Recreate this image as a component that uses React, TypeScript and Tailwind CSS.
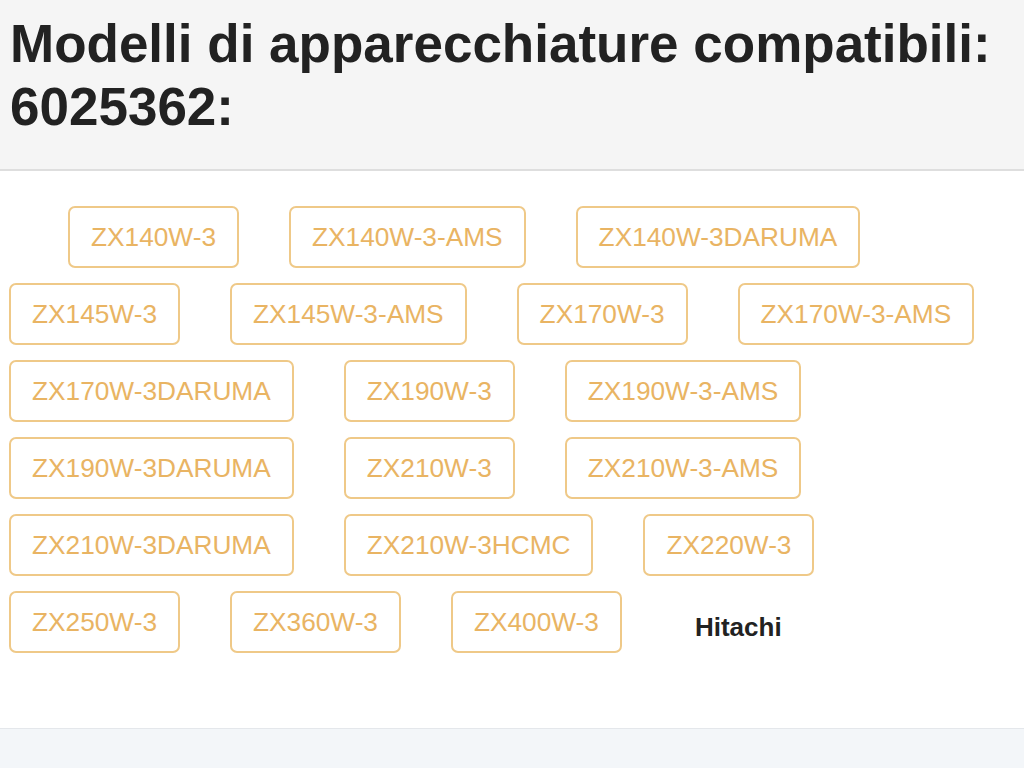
import React from 'react';

const models: string[] = [
  'ZX140W-3',
  'ZX140W-3-AMS',
  'ZX140W-3DARUMA',
  'ZX145W-3',
  'ZX145W-3-AMS',
  'ZX170W-3',
  'ZX170W-3-AMS',
  'ZX170W-3DARUMA',
  'ZX190W-3',
  'ZX190W-3-AMS',
  'ZX190W-3DARUMA',
  'ZX210W-3',
  'ZX210W-3-AMS',
  'ZX210W-3DARUMA',
  'ZX210W-3HCMC',
  'ZX220W-3',
  'ZX250W-3',
  'ZX360W-3',
  'ZX400W-3',
];

const ModelTag: React.FC<{ name: string }> = ({ name }) => (
  <span className="flex h-[62px] items-center rounded-[7px] border-2 border-[#efc988] px-[21px] text-[26.25px] leading-[26px] text-[#e9b463]">
    {name}
  </span>
);

const App: React.FC = () => {
  return (
    <div className="min-h-[768px] bg-[#f3f6f9] font-['Liberation_Sans',Arial,sans-serif]">
      <header className="border-b-2 border-[#dedede] bg-[#f5f5f5] px-[10px] pb-[31px] pt-[12px]">
        <h1 className="text-[53px] font-bold leading-[63px] text-[#222222]">
          Modelli di apparecchiature compatibili: 6025362:
        </h1>
      </header>

      <section className="border-b border-[#e4e7eb] bg-white pb-[75px] pl-[9px] pt-[35px]">
        <div className="flex flex-wrap gap-x-[50px] gap-y-[15px]">
          <span className="w-[9px]" />
          {models.map((m) => (
            <ModelTag key={m} name={m} />
          ))}
          <span className="flex h-[62px] items-center border-2 border-transparent px-[21px] pt-[9px] text-[26px] font-bold leading-[26px] text-[#222222]">
            Hitachi
          </span>
        </div>
      </section>
    </div>
  );
};

export default App;
